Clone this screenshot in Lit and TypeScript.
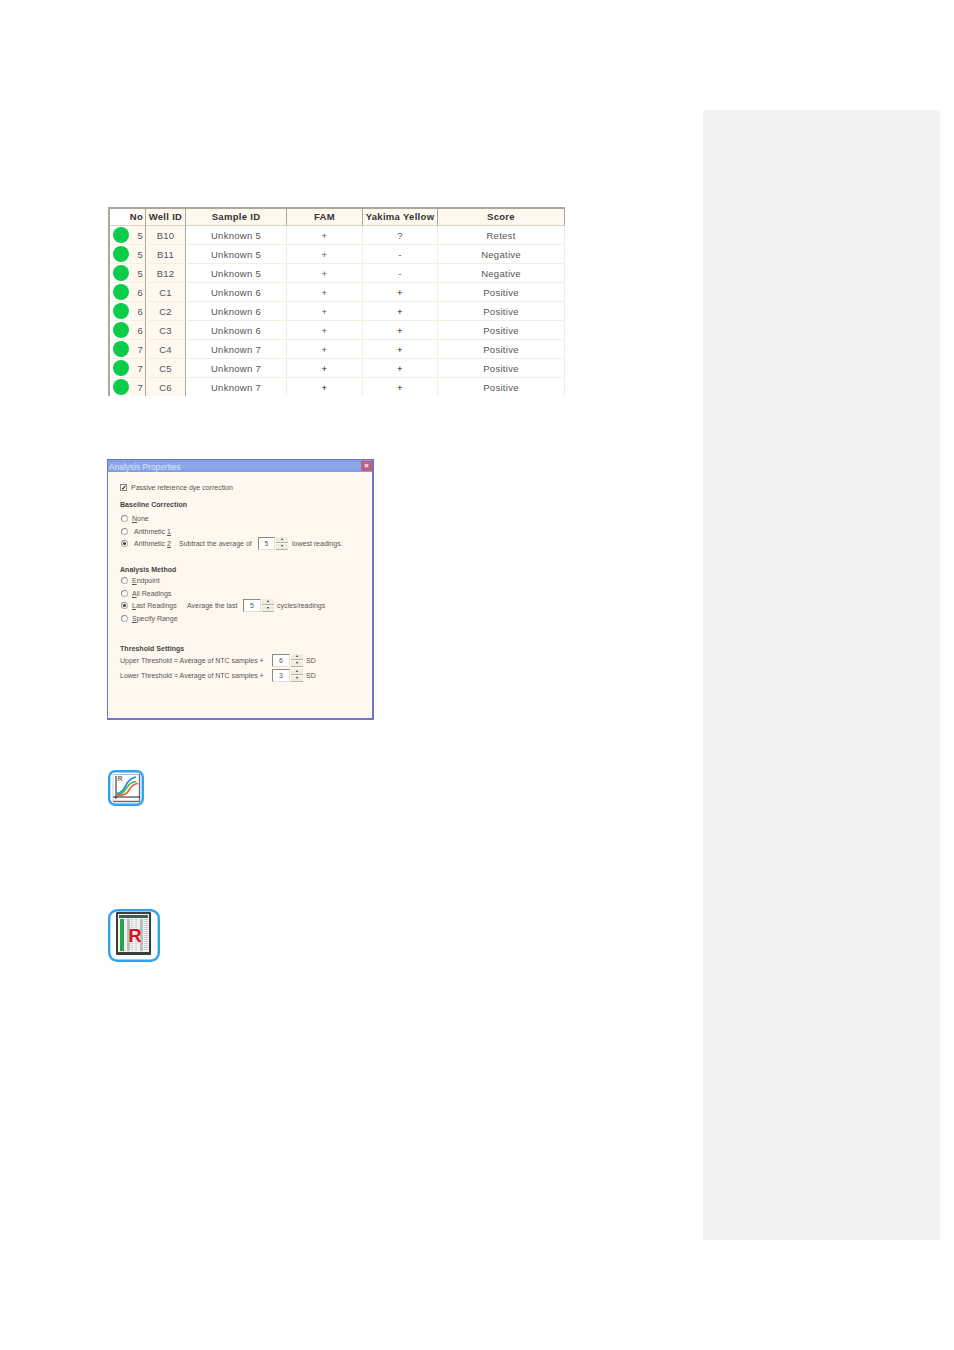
import { LitElement, html, css, svg } from "lit";
import { customElement } from "lit/decorators.js";

const rows = [
  ["5", "B10", "Unknown 5", "+", "?", "Retest"],
  ["5", "B11", "Unknown 5", "+", "-", "Negative"],
  ["5", "B12", "Unknown 5", "+", "-", "Negative"],
  ["6", "C1", "Unknown 6", "+", "+", "Positive"],
  ["6", "C2", "Unknown 6", "+", "+", "Positive"],
  ["6", "C3", "Unknown 6", "+", "+", "Positive"],
  ["7", "C4", "Unknown 7", "+", "+", "Positive"],
  ["7", "C5", "Unknown 7", "+", "+", "Positive"],
  ["7", "C6", "Unknown 7", "+", "+", "Positive"],
];

const spin = () => html`<span class="spin"><i>▴</i><i>▾</i></span>`;

const curveIcon = svg`<svg width="36" height="36" viewBox="0 0 36 36">
  <rect x="1.2" y="1.2" width="33.6" height="33.6" rx="6" fill="#fff" stroke="#2fa2f2" stroke-width="2.4"/>
  <path d="M5 4.5H31" stroke="#b8bcc4" stroke-width="1" fill="none"/>
  <path d="M5 5V31" stroke="#d0d4da" stroke-width="1" fill="none"/>
  <path d="M31.5 4V31.5H5" stroke="#6a7078" stroke-width="1.4" fill="none"/>
  <path d="M8 6V29M5 27H32" stroke="#1c1c1c" stroke-width="1" fill="none"/>
  <path d="M9 23.5C14 23 16 19 18 15C20 11 23 8 28 7" stroke="#2a86e8" stroke-width="1.7" fill="none"/>
  <path d="M9 25C15 24.5 17 20 20 16C22 13 24 12 28.5 11.5" stroke="#35c24a" stroke-width="1.7" fill="none"/>
  <path d="M9 25.5C16 25.5 19 24 21.5 19.5C23.5 15.5 26 14 30 13.5" stroke="#ea5a2c" stroke-width="1.7" fill="none"/>
  <text x="9.4" y="11" font-family="Liberation Sans" font-size="7" font-weight="700" fill="#8a6a50">R</text>
</svg>`;

const tableIcon = svg`<svg width="52" height="53" viewBox="0 0 52 53">
  <rect x="1.2" y="1.2" width="49.6" height="50.6" rx="8" fill="#fff" stroke="#2fa2f2" stroke-width="2.4"/>
  <rect x="8" y="3" width="35" height="43" rx="1" fill="#3c3c3c"/>
  <rect x="10" y="5" width="31" height="38" fill="#f0f0f0"/>
  <rect x="11" y="6" width="29" height="3" fill="#3f5e52"/>
  <rect x="12" y="10" width="4" height="32" fill="#26a548"/>
  <rect x="19" y="10" width="3" height="32" fill="#bdbdbd"/>
  <rect x="32" y="10" width="3" height="32" fill="#bdbdbd"/>
  <path d="M24 10V42M28 10V42M37 10V42M39 10V42" stroke="#a8a8a8" stroke-width="1" stroke-dasharray="1 1" fill="none"/>
  <text x="20.5" y="32.5" font-family="Liberation Sans" font-size="18" font-weight="700" fill="#d8101c">R</text>
</svg>`;

@customElement("app-root")
export class AppRoot extends LitElement {
  static styles = css`
    :host {
      display: block;
      font-family: "Liberation Sans", Arial, sans-serif;
      background: #fff;
    }
    .page {
      height: 1350px;
      display: flex;
      align-items: flex-start;
      overflow: hidden;
    }
    .main {
      width: 703px;
      padding: 207px 0 0 107px;
      box-sizing: border-box;
    }
    .aside {
      width: 237px;
      height: 1130px;
      margin-top: 110px;
      background: #f2f2f2;
    }

    .table {
      width: 457px;
      height: 189px;
      margin-left: 1px;
      overflow: hidden;
      box-sizing: border-box;
      border-left: 2px solid #aca899;
      color: #555;
      font-size: 9.5px;
      letter-spacing: 0.28px;
    }
    .row {
      display: grid;
      grid-template-columns: 36px 40px 101px 76px 75px 127px;
      height: 19px;
      box-sizing: border-box;
      background: #fff;
    }
    .cell {
      box-sizing: border-box;
      display: flex;
      align-items: center;
      justify-content: center;
      border-right: 1px solid #f1efe2;
      border-bottom: 1px solid #f1efe2;
      height: 19px;
      white-space: nowrap;
    }
    .head {
      background: #fff8ee;
      border-top: 2px solid #aca899;
    }
    .head .cell {
      height: 17px;
      padding-bottom: 2px;
      background: #fff8ee;
      color: #333;
      font-weight: 700;
      border-right: 1px solid #aca899;
      border-bottom: 1px solid #d8d4c4;
      letter-spacing: 0.3px;
      font-size: 9.5px;
    }
    .head .no { justify-content: flex-end; padding-right: 1px; }
    .row .no {
      justify-content: flex-end;
      padding-right: 2px;
      border-right: 1px solid #aca899;
      background: linear-gradient(to right, #fff 20px, #fff8ee 20px);
      position: relative;
    }
    .row .well {
      background: #fff8ee;
      border-right: 1px solid #aca899;
    }
    .dot {
      position: absolute;
      left: 3px;
      top: 1px;
      width: 16px;
      height: 16px;
      border-radius: 50%;
      background: #0ccc4a;
    }
    .strong { color: #111; }

    .dialog {
      width: 267px;
      height: 261px;
      margin-top: 63px;
      box-sizing: border-box;
      border: 1px solid #6f75c8;
      border-width: 1px 2px 2px 1px;
      background: #fff8ee;
      color: #555;
      font-size: 7px;
      display: flex;
      flex-direction: column;
    }
    .title {
      height: 12px;
      flex: none;
      background: linear-gradient(to bottom, #7f9be2, #8eaaec 50%, #7f9ce4);
      color: #dbe6fb;
      font-size: 8.4px;
      display: flex;
      align-items: center;
      justify-content: space-between;
      padding: 1px 0 0 1px;
      box-sizing: border-box;
    }
    .close {
      width: 11px;
      height: 10px;
      margin-top: -1px;
      border-radius: 1px;
      background: #c06080;
      color: #fff;
      font-size: 8px;
      line-height: 10px;
      font-weight: 700;
      text-align: center;
    }
    .body { padding: 10px 0 0 12px; }
    .line {
      height: 10px;
      display: flex;
      align-items: center;
      white-space: nowrap;
    }
    .g1 { margin-top: 1px; }
    .g2 { margin-top: 2px; }
    .g3 { margin-top: 3px; }
    .g4 { margin-top: 4px; }
    .g5 { margin-top: 5px; }
    .g7 { margin-top: 7px; }
    .g16 { margin-top: 16px; }
    .g20 { margin-top: 20px; }
    b { color: #444; letter-spacing: 0.05px; }
    .check {
      width: 7px;
      height: 7px;
      box-sizing: border-box;
      border: 1px solid #8a8a80;
      background: #fff;
      margin-right: 4px;
      color: #222;
      font-size: 7px;
      font-weight: 700;
      line-height: 5px;
      text-align: center;
      overflow: hidden;
    }
    .radio {
      width: 7px;
      height: 7px;
      box-sizing: border-box;
      border-radius: 50%;
      border: 1px solid #b4b4aa;
      border-top-color: #8c8c84;
      border-left-color: #8c8c84;
      background: #fff;
      margin: 0 4px 0 1px;
      flex: none;
      display: flex;
      align-items: center;
      justify-content: center;
    }
    .radio.on::after {
      content: "";
      width: 3px;
      height: 3px;
      border-radius: 50%;
      background: #333;
    }
    .pad { margin-left: 2px; }
    .input {
      height: 13px;
      box-sizing: border-box;
      border: 1px solid #8a8a80;
      border-right-color: #e4e2d8;
      border-bottom-color: #e4e2d8;
      background: #fff;
      display: flex;
      align-items: center;
      justify-content: center;
      flex: none;
    }
    .spin {
      width: 12px;
      height: 13px;
      flex: none;
      display: flex;
      flex-direction: column;
      gap: 1px;
      margin: 0 3px 0 1px;
    }
    .spin i {
      flex: 1;
      background: #f0ede0;
      border-bottom: 1px solid #b8b4a4;
      box-sizing: border-box;
      font-style: normal;
      font-size: 4px;
      line-height: 4px;
      text-align: center;
      color: #333;
      overflow: hidden;
    }
    .w-a { width: 45px; }
    .w-l { width: 55px; }
    .w-b { width: 56px; }
    .w-c { width: 79px; }
    .w-d { width: 152px; }
    .low { margin-left: 1px; }

    .icon { display: block; margin-left: 1px; }
    .i1 { margin-top: 50px; }
    .i2 { margin-top: 99px; }
  `;

  render() {
    return html`
      <div class="page">
        <div class="main">
          <div class="table">
            <div class="row head">
              <div class="cell no">No</div>
              <div class="cell">Well ID</div>
              <div class="cell">Sample ID</div>
              <div class="cell">FAM</div>
              <div class="cell">Yakima Yellow</div>
              <div class="cell">Score</div>
            </div>
            ${rows.map(
              (r, i) => html`
                <div class="row">
                  <div class="cell no"><span class="dot"></span>${r[0]}</div>
                  <div class="cell well">${r[1]}</div>
                  <div class="cell">${r[2]}</div>
                  <div class="cell ${i > 6 ? "strong" : ""}">${r[3]}</div>
                  <div class="cell ${i > 2 ? "strong" : ""}">${r[4]}</div>
                  <div class="cell">${r[5]}</div>
                </div>
              `
            )}
          </div>

          <div class="dialog">
            <div class="title">Analysis Properties<span class="close">×</span></div>
            <div class="body">
              <div class="line"><span class="check">✓</span>Passive reference dye correction</div>
              <div class="line g7"><b>Baseline Correction</b></div>
              <div class="line g4"><span class="radio"></span><u>N</u>one</div>
              <div class="line g3"><span class="radio"></span><span class="pad">Arithmetic <u>1</u></span></div>
              <div class="line g2">
                <span class="radio on"></span><span class="pad w-a">Arithmetic <u>2</u></span>
                <span class="w-c">Subtract the average of</span>
                <span class="input" style="width:17px">5</span>${spin()}
                <span class="low">lowest readings.</span>
              </div>
              <div class="line g16"><b>Analysis Method</b></div>
              <div class="line g1"><span class="radio"></span><u>E</u>ndpoint</div>
              <div class="line g3"><span class="radio"></span><u>A</u>ll Readings</div>
              <div class="line g2">
                <span class="radio on"></span><span class="w-l"><u>L</u>ast Readings</span>
                <span class="w-b">Average the last</span>
                <span class="input" style="width:18px">5</span>${spin()}cycles/readings
              </div>
              <div class="line g3"><span class="radio"></span><u>S</u>pecify Range</div>
              <div class="line g20"><b>Threshold Settings</b></div>
              <div class="line g2">
                <span class="w-d">Upper Threshold = Average of NTC samples +</span>
                <span class="input" style="width:18px">6</span>${spin()}SD
              </div>
              <div class="line g5">
                <span class="w-d">Lower Threshold = Average of NTC samples +</span>
                <span class="input" style="width:18px">3</span>${spin()}SD
              </div>
            </div>
          </div>

          <div class="icon i1">${curveIcon}</div>
          <div class="icon i2">${tableIcon}</div>
        </div>
        <div class="aside"></div>
      </div>
    `;
  }
}
